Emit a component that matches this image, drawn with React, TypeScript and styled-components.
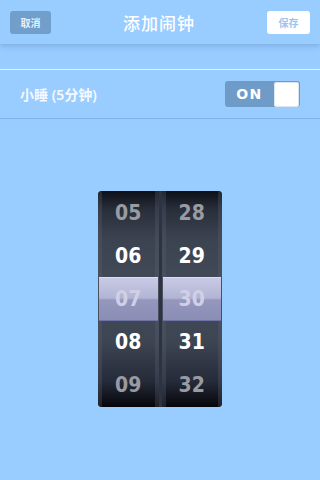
import styled, { createGlobalStyle } from 'styled-components'

const GlobalStyle = createGlobalStyle`
  body {
    margin: 0;
    background: #99ccff;
    font-family: "Noto Sans", "Noto Sans CJK SC", sans-serif;
  }
`

const Screen = styled.div`
  width: 320px;
  height: 480px;
  background: #99ccff;
  overflow: hidden;
`

const Header = styled.header`
  height: 44px;
  padding: 0 10px;
  display: flex;
  align-items: center;
  justify-content: space-between;
  background: #99ccff;
  box-shadow: 0 2px 6px rgba(40, 80, 130, 0.25);
  position: relative;
`

const Title = styled.h1`
  margin: 0;
  font-size: 17px;
  font-weight: 500;
  color: #ffffff;
  letter-spacing: 1px;
  font-family: "Noto Sans CJK SC", sans-serif;
`

const NavButton = styled.button<{ $primary?: boolean }>`
  height: 23px;
  padding: 0 8px;
  border: none;
  border-radius: 3px;
  font-size: 10px;
  font-weight: 700;
  font-family: "Noto Sans CJK SC", sans-serif;
  background: ${p => (p.$primary ? '#ffffff' : '#719ecb')};
  color: ${p => (p.$primary ? '#9cc6f0' : '#e6f0fa')};
  width: ${p => (p.$primary ? '43px' : '41px')};
`

const Section = styled.section`
  margin-top: 25px;
  border-top: 1px solid #e6f2ff;
  border-bottom: 1px solid #80b4ea;
`

const Row = styled.div`
  height: 48px;
  padding: 0 20px;
  display: flex;
  align-items: center;
  justify-content: space-between;
`

const RowLabel = styled.span`
  font-size: 14px;
  font-weight: 600;
  color: #f4f9ff;
  font-family: "Noto Sans", "Noto Sans CJK SC", sans-serif;
`

const Switch = styled.div`
  width: 75px;
  height: 26px;
  border-radius: 3px;
  background: #6f9bc8;
  display: flex;
  align-items: center;
  box-sizing: border-box;
  padding-right: 1px;
`

const SwitchText = styled.span`
  flex: 1;
  text-align: center;
  font-family: "DejaVu Sans", sans-serif;
  font-weight: 700;
  font-size: 14px;
  color: #ffffff;
  letter-spacing: 1.5px;
`

const Knob = styled.div`
  width: 25px;
  height: 25px;
  background: #ffffff;
  border-radius: 3px;
  box-shadow: inset 0 0 0 1px #dde6ee;
`

const PickerWrap = styled.div`
  display: flex;
  justify-content: center;
  margin-top: 72px;
`

const Picker = styled.div`
  width: 124px;
  height: 216px;
  border-radius: 4px;
  background: #2c3442;
  display: flex;
  gap: 3px;
  overflow: hidden;
`

const Column = styled.div`
  flex: 1;
  display: grid;
  grid-template-rows: repeat(5, 1fr);
  background: linear-gradient(
    to bottom,
    #0c0f16 0%,
    #272d39 8%,
    #3c4350 22%,
    #444b58 45%,
    #3d4452 70%,
    #262b3a 88%,
    #05060a 100%
  );
  box-shadow: inset 4px 0 0 rgba(90, 100, 120, 0.3), inset -4px 0 0 rgba(90, 100, 120, 0.3);
`

const Cell = styled.div<{ $tone: 'dim' | 'bright' | 'active' }>`
  display: flex;
  align-items: center;
  justify-content: center;
  font-family: "DejaVu Sans Condensed", "DejaVu Sans", sans-serif;
  font-weight: 700;
  font-size: 21px;
  color: ${p => (p.$tone === 'bright' ? '#ffffff' : p.$tone === 'active' ? '#cfd0e6' : '#9a9ba2')};
  ${p =>
    p.$tone === 'active' &&
    `
    margin: 0 1px;
    background: linear-gradient(to bottom, #c9cbe6 0%, #b2b4d4 48%, #9597bd 52%, #8a8db4 100%);
    box-shadow: inset 0 -1px 0 #6f73a8, inset 0 1px 0 #dcdff2;
  `}
`

const hours = ['05', '06', '07', '08', '09']
const minutes = ['28', '29', '30', '31', '32']
const tones: Array<'dim' | 'bright' | 'active'> = ['dim', 'bright', 'active', 'bright', 'dim']

export default function App() {
  return (
    <Screen>
      <GlobalStyle />
      <Header>
        <NavButton>取消</NavButton>
        <Title>添加闹钟</Title>
        <NavButton $primary>保存</NavButton>
      </Header>
      <Section>
        <Row>
          <RowLabel>小睡 (5分钟)</RowLabel>
          <Switch>
            <SwitchText>ON</SwitchText>
            <Knob />
          </Switch>
        </Row>
      </Section>
      <PickerWrap>
        <Picker>
          <Column>
            {hours.map((h, i) => (
              <Cell key={h} $tone={tones[i]}>{h}</Cell>
            ))}
          </Column>
          <Column>
            {minutes.map((m, i) => (
              <Cell key={m} $tone={tones[i]}>{m}</Cell>
            ))}
          </Column>
        </Picker>
      </PickerWrap>
    </Screen>
  )
}
